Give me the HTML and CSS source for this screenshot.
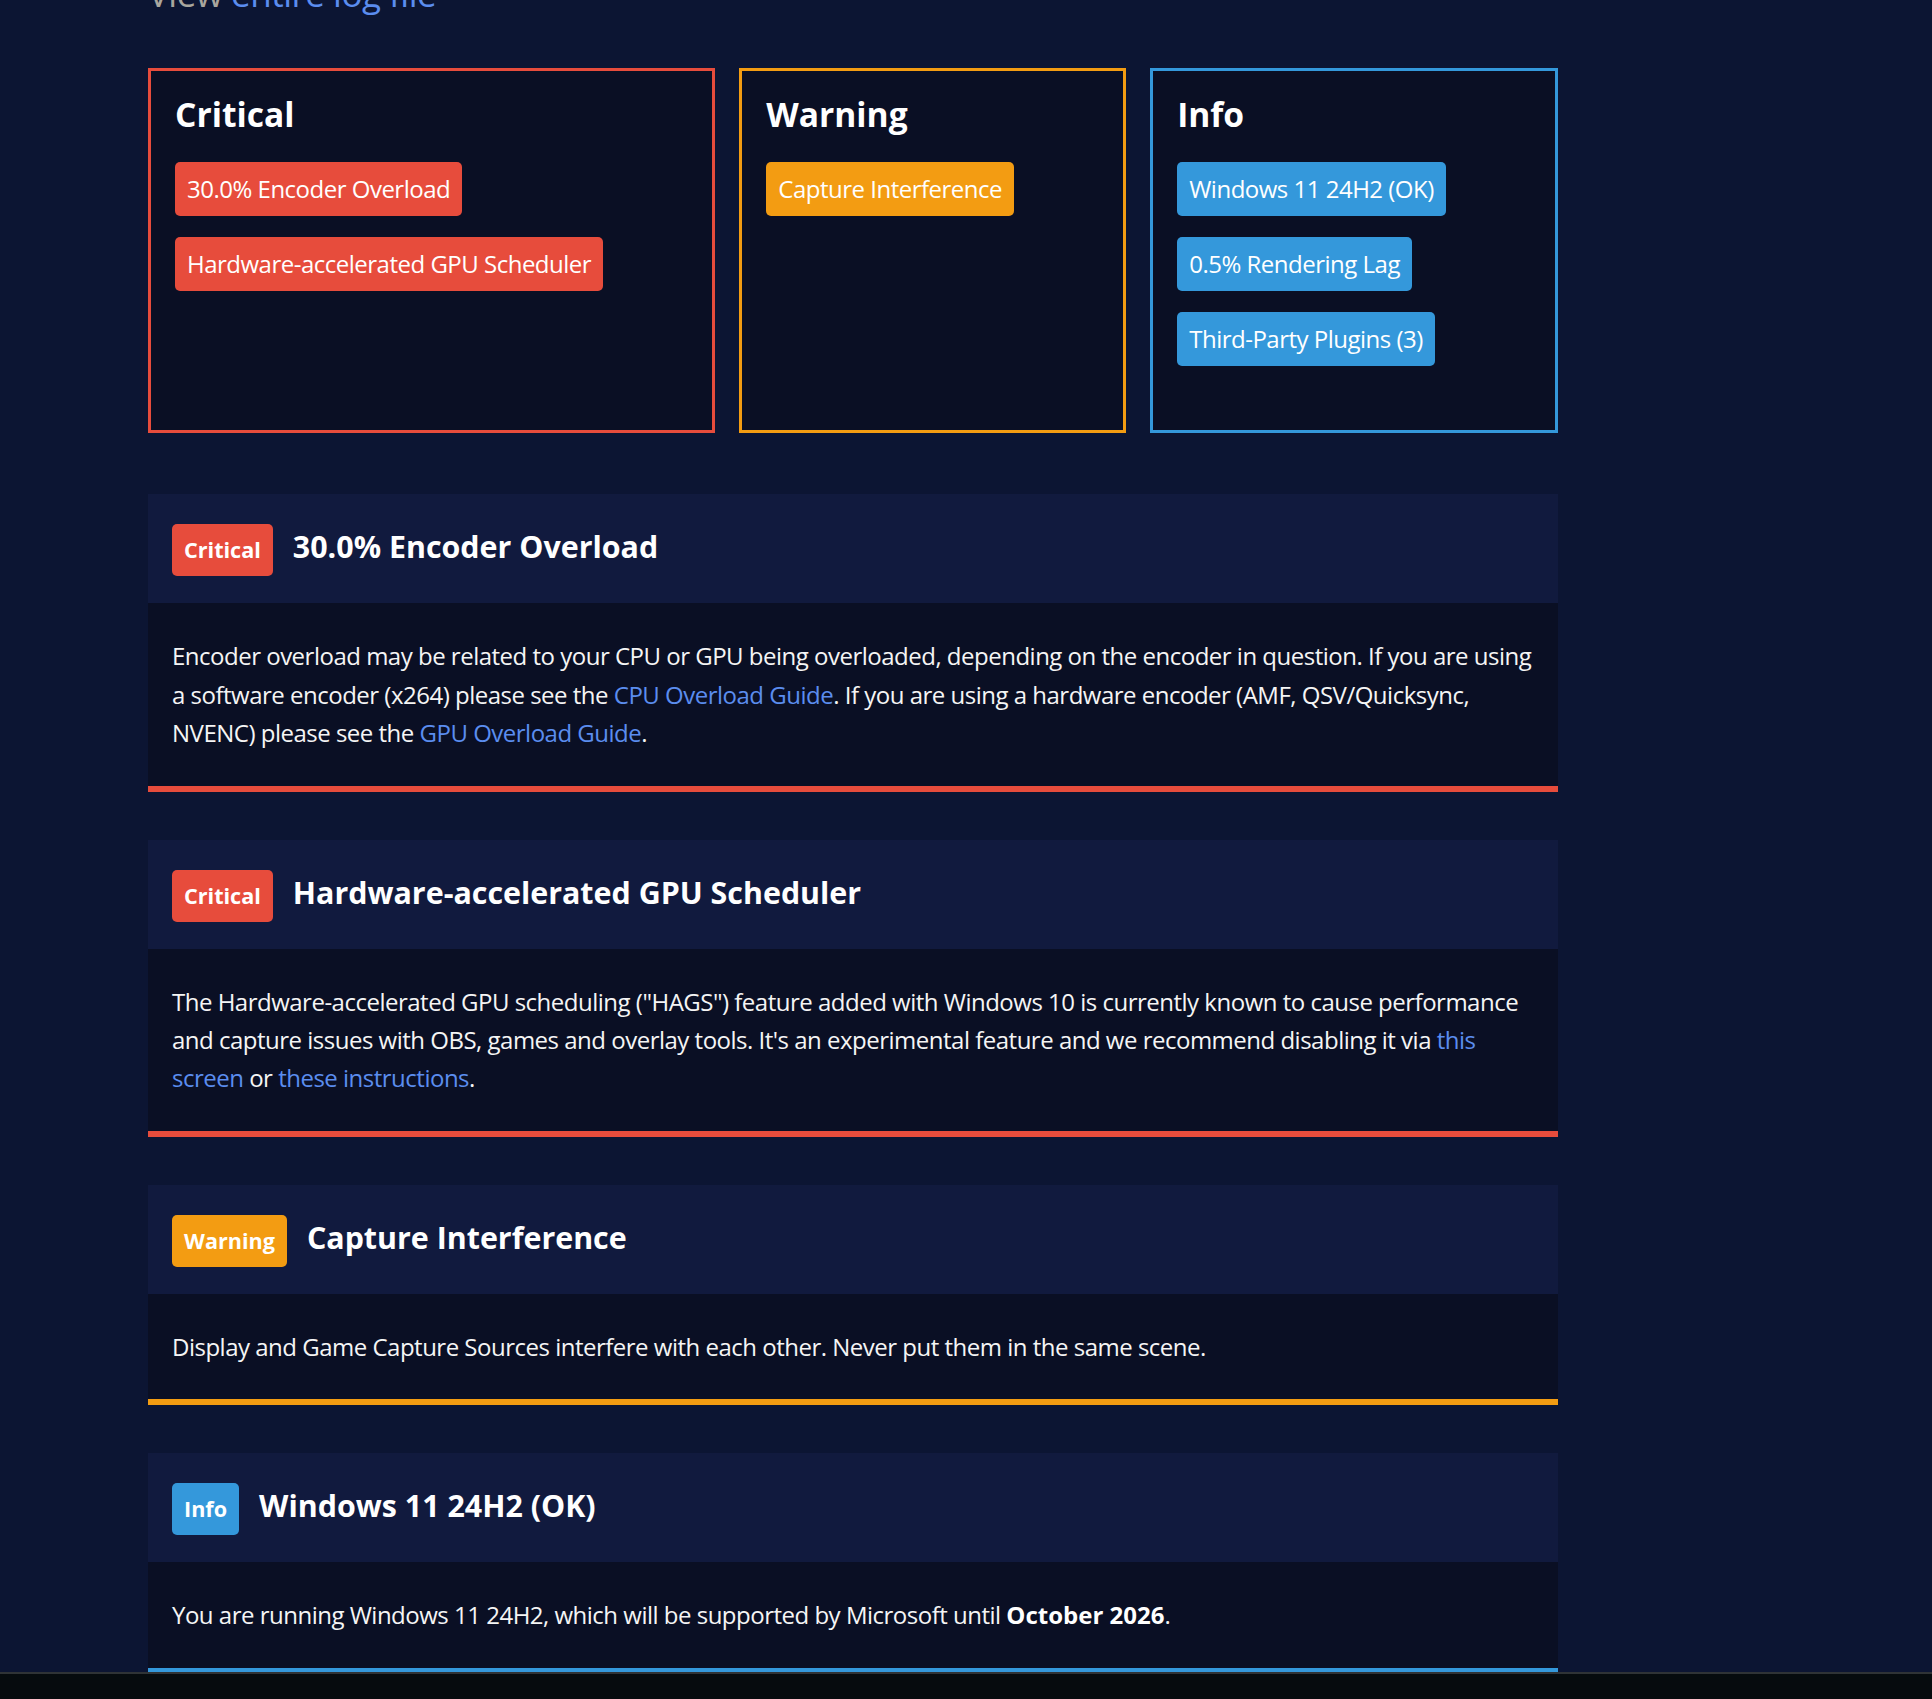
FILE: index.html
```html
<!DOCTYPE html>
<html lang="en">

<head>
    <meta charset="UTF-8">
    <meta name="viewport" content="width=device-width, initial-scale=1.0">
    <title>Log Analysis</title>
    <link rel="stylesheet" href="styles.css">
</head>

<body>
    <main class="results">
        <p class="log-link">View <a href="#">entire log file</a></p>

        <section class="summary">
            <div class="summary-box critical">
                <h3>Critical</h3>
                <div class="summary-list">
                    <a href="#encoder" class="tag">30.0% Encoder Overload</a>
                    <a href="#hags" class="tag">Hardware-accelerated GPU Scheduler</a>
                </div>
            </div>
            <div class="summary-box warning">
                <h3>Warning</h3>
                <div class="summary-list">
                    <a href="#capture" class="tag">Capture Interference</a>
                </div>
            </div>
            <div class="summary-box info">
                <h3>Info</h3>
                <div class="summary-list">
                    <a href="#windows" class="tag">Windows 11 24H2 (OK)</a>
                    <a href="#lag" class="tag">0.5% Rendering Lag</a>
                    <a href="#plugins" class="tag">Third-Party Plugins (3)</a>
                </div>
            </div>
        </section>

        <article class="issue critical" id="encoder">
            <div class="issue-header">
                <span class="level">Critical</span>
                <h2>30.0% Encoder Overload</h2>
            </div>
            <div class="issue-body">
                <p>Encoder overload may be related to your CPU or GPU being overloaded, depending on the encoder in question. If you are using a software encoder (x264) please see the <a href="#">CPU Overload Guide</a>. If you are using a hardware encoder (AMF, QSV/Quicksync, NVENC) please see the <a href="#">GPU Overload Guide</a>.</p>
            </div>
        </article>

        <article class="issue critical" id="hags">
            <div class="issue-header">
                <span class="level">Critical</span>
                <h2>Hardware-accelerated GPU Scheduler</h2>
            </div>
            <div class="issue-body">
                <p>The Hardware-accelerated GPU scheduling ("HAGS") feature added with Windows 10 is currently known to cause performance and capture issues with OBS, games and overlay tools. It's an experimental feature and we recommend disabling it via <a href="#">this screen</a> or <a href="#">these instructions</a>.</p>
            </div>
        </article>

        <article class="issue warning" id="capture">
            <div class="issue-header">
                <span class="level">Warning</span>
                <h2>Capture Interference</h2>
            </div>
            <div class="issue-body">
                <p>Display and Game Capture Sources interfere with each other. Never put them in the same scene.</p>
            </div>
        </article>

        <article class="issue info" id="windows">
            <div class="issue-header">
                <span class="level">Info</span>
                <h2>Windows 11 24H2 (OK)</h2>
            </div>
            <div class="issue-body">
                <p>You are running Windows 11 24H2, which will be supported by Microsoft until <strong>October 2026</strong>.</p>
            </div>
        </article>
    </main>

    <div class="status-bar"></div>
</body>

</html>
```

FILE: styles.css
```css
body {
    font-family: "Open Sans", "Liberation Sans", sans-serif;
    background-color: #0c1533;
    color: #f5f5f5;
    margin: 0;
    padding: 0;
}

a {
    color: #5b8def;
    text-decoration: none;
}

.results {
    width: 1410px;
    margin-left: 148px;
    padding-bottom: 60px;
}

.log-link {
    margin: -32px 0 48px;
    font-size: 35px;
    line-height: 52px;
    letter-spacing: -0.5px;
    color: #a9a69e;
}

/* summary boxes */

.summary {
    display: flex;
    gap: 24px;
    margin-bottom: 61px;
}

.summary-box {
    flex: 1 1 auto;
    background-color: #0a0f24;
    border: 3px solid;
    padding: 23px 24px 43px;
}

.summary-box.critical { border-color: #e74c3c; }
.summary-box.warning { border-color: #f39c12; }
.summary-box.info { border-color: #3498db; }

.summary-box h3 {
    margin: 0 0 28px;
    font-size: 33.6px;
    line-height: 1.2;
    font-weight: 700;
    color: #ffffff;
}

.summary-list {
    display: flex;
    flex-direction: column;
    align-items: flex-start;
}

.tag {
    display: inline-block;
    margin-bottom: 21px;
    padding: 9px 12px;
    font-size: 24px;
    line-height: 36px;
    letter-spacing: -0.5px;
    color: #ffffff;
    border-radius: 5px;
    white-space: nowrap;
}

.critical .tag, .critical .level { background-color: #e74c3c; }
.warning .tag, .warning .level { background-color: #f39c12; }
.info .tag, .info .level { background-color: #3498db; }

/* issue cards */

.issue {
    margin-bottom: 48px;
    border-bottom: 6px solid;
}

.issue.critical { border-color: #e74c3c; }
.issue.warning { border-color: #f39c12; }
.issue.info { border-color: #3498db; }

.issue-header {
    display: flex;
    align-items: baseline;
    gap: 20px;
    padding: 30px 24px 27px;
    background-color: #111a3e;
}

.level {
    padding: 10px 12px;
    font-size: 21.6px;
    line-height: 32px;
    font-weight: 700;
    color: #ffffff;
    border-radius: 5px;
}

.issue-header h2 {
    margin: 0;
    font-size: 30.4px;
    line-height: 1.2;
    font-weight: 700;
    color: #ffffff;
}

.issue-body {
    background-color: #0a0f24;
    padding: 34px 24px 33px;
}

.issue-body p {
    margin: 0;
    font-size: 24px;
    line-height: 38.4px;
    letter-spacing: -0.5px;
}

.issue-body strong {
    font-weight: 700;
    letter-spacing: 0;
    color: #ffffff;
}

.status-bar {
    position: fixed;
    left: 0;
    right: 0;
    bottom: 0;
    height: 25px;
    background-color: #060b0e;
    border-top: 2px solid #2f3336;
}
```
